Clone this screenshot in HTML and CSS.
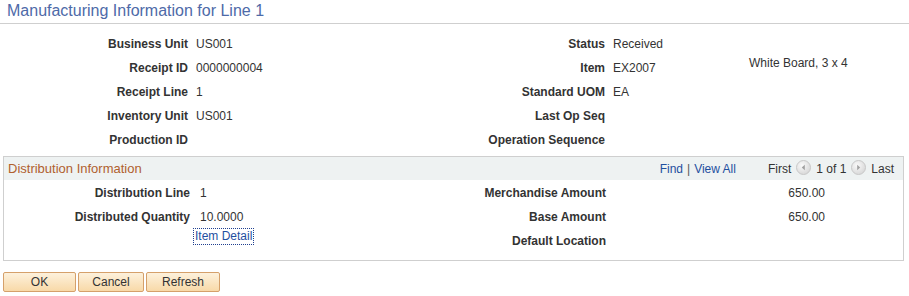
FILE: index.html
```html
<!doctype html>
<html>
<head>
<meta charset="utf-8">
<title>Manufacturing Information</title>
<link rel="stylesheet" href="styles.css">
</head>
<body>
	<div class="pageTitle">Manufacturing Information for Line 1</div>
	<div class="fields">
		<span class="lbl">Business Unit</span><span class="val">US001</span>
		<span class="lbl lbl2">Status</span><span class="val">Received</span><span></span>
		<span class="lbl">Receipt ID</span><span class="val">0000000004</span>
		<span class="lbl lbl2">Item</span><span class="val">EX2007</span><span class="val desc">White Board, 3 x 4</span>
		<span class="lbl">Receipt Line</span><span class="val">1</span>
		<span class="lbl lbl2">Standard UOM</span><span class="val">EA</span><span></span>
		<span class="lbl">Inventory Unit</span><span class="val">US001</span>
		<span class="lbl lbl2">Last Op Seq</span><span class="val"></span><span></span>
		<span class="lbl">Production ID</span><span class="val"></span>
		<span class="lbl lbl2">Operation Sequence</span><span class="val"></span><span></span>
	</div>
	<div class="box">
		<div class="boxHead">
			<span class="boxTitle">Distribution Information</span>
			<span class="nav">
				<a href="#">Find</a><span class="sep">|</span><a href="#">View All</a>
			</span>
			<span class="pager">
				<span>First</span>
				<svg class="arrow" width="15" height="15" viewBox="0 0 15 15"><defs><radialGradient id="g1" cx="0.4" cy="0.35" r="0.7"><stop offset="0" stop-color="#fafafa"/><stop offset="1" stop-color="#d6d6d6"/></radialGradient></defs><circle cx="7.5" cy="7.5" r="7" fill="url(#g1)" stroke="#c8c8c8"/><path d="M8.8 4.8 L5.8 7.5 L8.8 10.2 Z" fill="#a0a0a0"/></svg>
				<span>1 of 1</span>
				<svg class="arrow" width="15" height="15" viewBox="0 0 15 15"><defs><radialGradient id="g2" cx="0.4" cy="0.35" r="0.7"><stop offset="0" stop-color="#fafafa"/><stop offset="1" stop-color="#d6d6d6"/></radialGradient></defs><circle cx="7.5" cy="7.5" r="7" fill="url(#g2)" stroke="#c8c8c8"/><path d="M6.2 4.8 L9.2 7.5 L6.2 10.2 Z" fill="#a0a0a0"/></svg>
				<span>Last</span>
			</span>
		</div>
		<div class="dist">
			<span class="lbl">Distribution Line</span><span class="val">1</span>
			<span class="lbl">Merchandise Amount</span><span class="val num">650.00</span>
			<span class="lbl">Distributed Quantity</span><span class="val">10.0000</span>
			<span class="lbl">Base Amount</span><span class="val num">650.00</span>
			<span class="lbl"></span><span class="val"><a href="#" class="detail">Item Detail</a></span>
			<span class="lbl">Default Location</span><span class="val num"></span>
		</div>
	</div>
	<div class="buttons">
		<button class="btn btnOk">OK</button>
		<button class="btn btnCancel">Cancel</button>
		<button class="btn btnRefresh">Refresh</button>
	</div>
</body>
</html>
```
FILE: styles.css
```css
body {
	margin: 0;
	font: 12px/24px "Liberation Sans", Arial, sans-serif;
	color: #333;
	background: #fff;
}
a {
	text-decoration: none;
	color: #1f4f9f;
}
.pageTitle {
	height: 23px;
	padding-left: 7px;
	font-size: 16px;
	line-height: 21px;
	color: #4e6aa8;
	border-bottom: 1px solid #cfcfcf;
}
.fields {
	display: grid;
	grid-template-columns: 196px 220px 197px 136px 1fr;
	grid-auto-rows: 24px;
	padding-top: 8px;
}
.lbl {
	font-weight: bold;
	text-align: right;
	padding-right: 8px;
	white-space: nowrap;
}
.desc {
	line-height: 14px;
}
.box {
	margin: 4px 5px 0 3px;
	border: 1px solid #cfcfcf;
	padding: 0 0 7px;
}
.boxHead {
	display: flex;
	align-items: center;
	height: 23px;
	background: #eef2f2;
	padding: 0 9px 0 4px;
}
.boxTitle {
	flex: 1;
	font-size: 13px;
	color: #b0602e;
}
.nav {
	color: #1f4f9f;
}
.sep {
	margin: 0 4px;
	color: #555;
}
.pager {
	display: flex;
	align-items: center;
	gap: 5px;
	margin-left: 32px;
	color: #333;
}
.pager .arrow {
	display: block;
	margin-top: -3px;
}
.dist {
	display: grid;
	grid-template-columns: 196px 201px 205px 1fr;
	grid-auto-rows: 24px;
	padding-top: 1px;
}
.dist .lbl {
	padding-right: 10px;
}
.dist .lbl:nth-child(4n+3) {
	padding-right: 0;
}
.num {
	width: 219px;
	text-align: right;
}
.detail {
	display: inline-block;
	margin-left: -7px;
	padding: 0 1px;
	line-height: 15px;
	border: 1px dotted #1f3f8f;
	vertical-align: top;
	margin-top: -1px;
}
.buttons {
	display: flex;
	gap: 2px;
	margin: 11px 0 0 3px;
}
.btn {
	height: 20px;
	padding: 0;
	font: 12px "Liberation Sans", Arial, sans-serif;
	color: #333;
	background: linear-gradient(#fdf1dc, #f8d9a8);
	border: 1px solid #d5a06a;
	border-radius: 2px;
}
.btnOk {
	width: 73px;
}
.btnCancel {
	width: 66px;
}
.btnRefresh {
	width: 74px;
}
```
